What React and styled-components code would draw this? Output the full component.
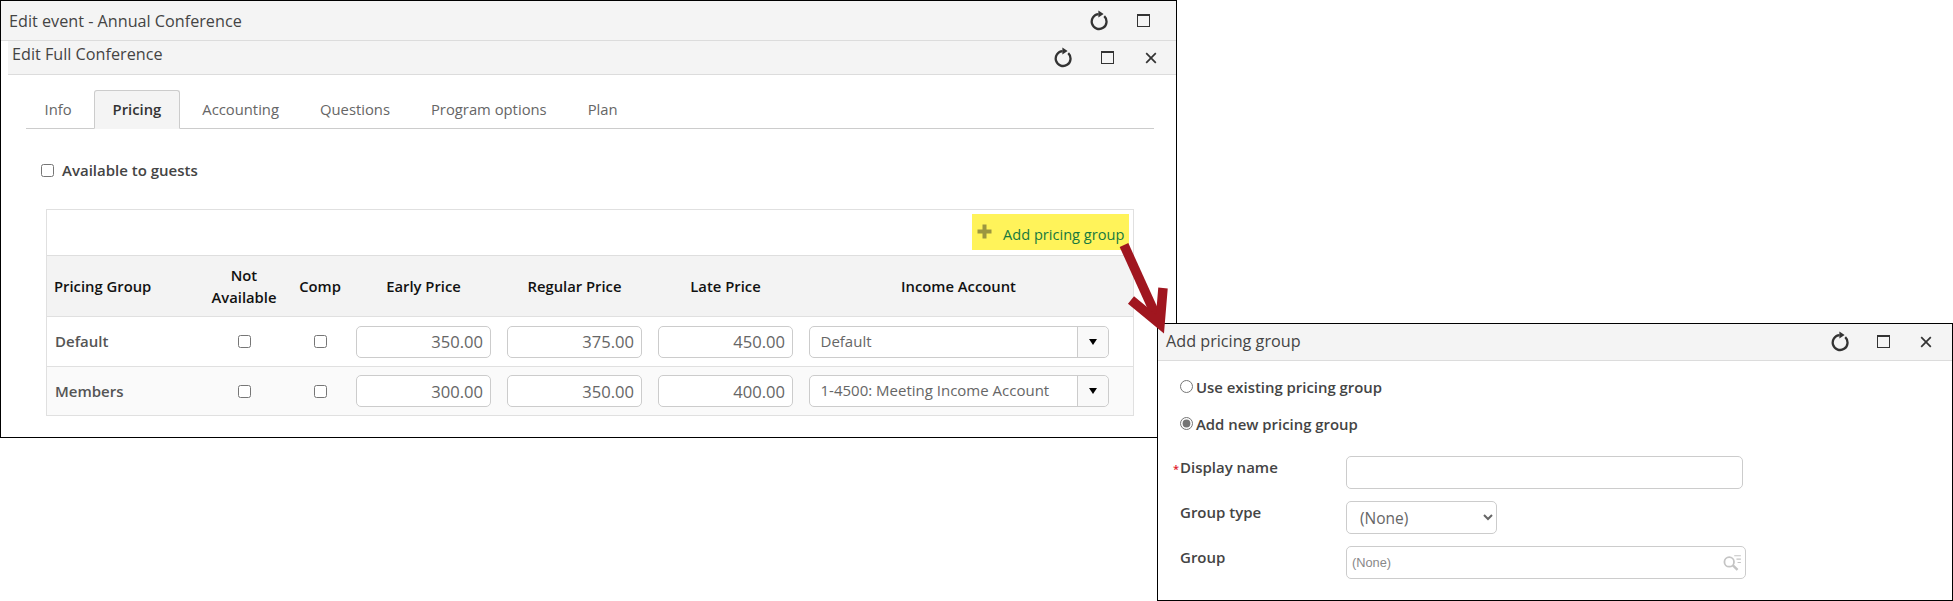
import styled, { createGlobalStyle } from "styled-components";

const GlobalStyle = createGlobalStyle`
    html, body {
        margin: 0;
        padding: 0;
        background: #fff;
    }
    body {
        font-family: "Open Sans", "Liberation Sans", sans-serif;
        color: #444;
    }
`;

const Desktop = styled.div`
    position: relative;
    width: 1953px;
    height: 601px;
    overflow: hidden;
`;

const Window = styled.div`
    position: absolute;
    box-sizing: border-box;
    left: ${(p) => p.$left}px;
    top: ${(p) => p.$top}px;
    width: ${(p) => p.$width}px;
    height: ${(p) => p.$height}px;
    background: #fff;
    border: 1.4px solid #000;
    display: flex;
    flex-direction: column;
`;

const TitleBar = styled.div`
    box-sizing: border-box;
    flex: none;
    display: flex;
    align-items: center;
    justify-content: space-between;
    height: ${(p) => p.$height}px;
    padding: ${(p) => p.$padding};
    background: #f4f4f4;
    border-bottom: 1px solid #dcdcdc;
`;

const Title = styled.span`
    font-size: 16.2px;
    color: #444;
    transform: translateY(${(p) => p.$shift || 0}px);
`;

const IconRow = styled.div`
    display: flex;
    align-items: center;
`;

const IconSlot = styled.span`
    width: ${(p) => p.$width || 44}px;
    display: flex;
    justify-content: center;
    align-items: center;
    color: #333;
`;

const MaxBox = styled.span`
    box-sizing: border-box;
    display: block;
    width: 13px;
    height: 13px;
    border: 1.3px solid #333;
    border-top-width: 2.4px;
`;

const Panel = styled.div`
    flex: 1;
    margin-left: 7px;
    display: flex;
    flex-direction: column;
`;

const Tabs = styled.div`
    display: flex;
    gap: 3px;
    height: 38px;
    margin: 15px 22px 0 17.5px;
    border-bottom: 1px solid #ccc;
`;

const Tab = styled.div`
    box-sizing: border-box;
    height: 39px;
    padding: 0 18px 2px;
    display: flex;
    align-items: center;
    font-size: 14.8px;
    font-weight: ${(p) => (p.$active ? 600 : 400)};
    color: ${(p) => (p.$active ? "#333" : "#666")};
    background: ${(p) => (p.$active ? "#f4f4f4" : "transparent")};
    border: 1px solid ${(p) => (p.$active ? "#ccc" : "transparent")};
    border-bottom: 1px solid ${(p) => (p.$active ? "#f4f4f4" : "transparent")};
    border-radius: 3px 3px 0 0;
`;

const Guests = styled.label`
    display: flex;
    align-items: center;
    gap: 8px;
    margin: 31px 0 0 33px;
    height: 20px;
    font-size: 15px;
    font-weight: 600;
    color: #444;
`;

const Check = styled.input.attrs({ type: "checkbox" })`
    margin: 0;
    width: 13px;
    height: 13px;
`;

const PriceTable = styled.div`
    box-sizing: border-box;
    width: 1088px;
    margin: 29px 0 0 38px;
    border: 1px solid #e0e0e0;
    border-bottom: 0;
`;

const Toolbar = styled.div`
    box-sizing: border-box;
    height: 46px;
    padding: 4px 4px 0 0;
    display: flex;
    justify-content: flex-end;
    align-items: flex-start;
    border-bottom: 1px solid #dedede;
`;

const AddLink = styled.div`
    box-sizing: border-box;
    width: 157px;
    height: 36px;
    padding: 4px 4px 0 5px;
    display: flex;
    align-items: center;
    background: #fff35a;
    color: #17793f;
    font-size: 14.6px;
    white-space: nowrap;

    svg {
        flex: none;
        margin: -5px 11px 0 0;
    }
`;

const Row = styled.div`
    box-sizing: border-box;
    display: grid;
    grid-template-columns: 149px 96px 56px 151px 151px 151px 315px 1fr;
    align-items: center;
    height: ${(p) => p.$height}px;
    background: ${(p) => p.$bg};
    border-bottom: 1px solid #e0e0e0;
`;

const HeadCell = styled.div`
    font-size: 14.8px;
    line-height: 22px;
    font-weight: 600;
    color: #111;
    text-align: ${(p) => (p.$left ? "left" : "center")};
    padding-left: ${(p) => (p.$left ? 7 : 0)}px;
`;

const NameCell = styled.div`
    font-size: 15px;
    font-weight: 600;
    color: #555;
    padding-left: 8px;
    transform: translateY(${(p) => p.$shift || 0}px);
`;

const Cell = styled.div`
    display: flex;
    justify-content: center;
    align-items: center;
`;

const PriceInput = styled.input`
    box-sizing: border-box;
    width: 135px;
    height: 32px;
    padding: 0 7px;
    text-align: right;
    font: 16.6px "Open Sans", sans-serif;
    color: #666;
    background: #fff;
    border: 1px solid #ccc;
    border-radius: 5px;
`;

const Combo = styled.div`
    box-sizing: border-box;
    width: 300px;
    height: 32px;
    display: flex;
    align-items: stretch;
    background: #fff;
    border: 1px solid #ccc;
    border-radius: 5px;
    font-size: 15px;
    color: #666;
`;

const ComboText = styled.span`
    flex: 1;
    padding-left: 11px;
    line-height: 29px;
    white-space: nowrap;
`;

const ComboButton = styled.span`
    flex: none;
    width: 30px;
    display: flex;
    align-items: center;
    justify-content: center;
    background: #f9f9f9;
    border-left: 1px solid #ccc;
    border-radius: 0 5px 5px 0;
`;

const Caret = styled.span`
    width: 0;
    height: 0;
    border-left: 4.5px solid transparent;
    border-right: 4.5px solid transparent;
    border-top: 6px solid #000;
`;

const DialogBody = styled.div`
    padding: 16px 0 0 22px;
    display: flex;
    flex-direction: column;
`;

const RadioLine = styled.label`
    display: flex;
    align-items: center;
    gap: 3px;
    height: 20px;
    margin-bottom: 17px;
    font-size: 14.9px;
    font-weight: 600;
    color: #444;
`;

const Radio = styled.input.attrs({ type: "radio" })`
    margin: 0;
    width: 13px;
    height: 13px;
    accent-color: #757575;
`;

const FormRow = styled.div`
    display: grid;
    grid-template-columns: 166px auto;
    justify-content: start;
    align-items: start;
    margin-top: ${(p) => p.$gap}px;
`;

const FieldLabel = styled.div`
    position: relative;
    font-size: 15px;
    font-weight: 600;
    line-height: 22px;
    color: #444;
`;

const Required = styled.span`
    position: absolute;
    left: -7px;
    top: 2px;
    font-size: 11px;
    color: #e0202a;
`;

const TextBox = styled.input`
    box-sizing: border-box;
    width: 397px;
    height: 33px;
    background: #fff;
    border: 1px solid #ccc;
    border-radius: 5px;
`;

const TypeSelect = styled.select`
    box-sizing: border-box;
    width: 151px;
    height: 33px;
    padding-left: 9px;
    font: 15.5px "Open Sans", sans-serif;
    color: #666;
    background: #fff;
    border: 1px solid #ccc;
    border-radius: 5px;
`;

const LookupBox = styled.div`
    box-sizing: border-box;
    width: 400px;
    height: 33px;
    padding: 0 3px 0 5px;
    display: flex;
    align-items: center;
    justify-content: space-between;
    border: 1px solid #ccc;
    border-radius: 5px;
    font: 12.8px "Liberation Sans", sans-serif;
    color: #888;
`;

const ArrowLayer = styled.svg`
    position: absolute;
    left: 0;
    top: 0;
    pointer-events: none;
`;

function RefreshIcon() {
    return (
        <svg width="20" height="21" viewBox="0 0 20 21" fill="none">
            <path d="M15.2 6.2A7.4 7.4 0 1 1 9.6 4.2" stroke="#333" strokeWidth="2.3" />
            <path d="M9.4 .6 14.6 4 9.4 7.4z" fill="#333" />
        </svg>
    );
}

function CloseIcon() {
    return (
        <svg width="12" height="12" viewBox="0 0 12 12" fill="none">
            <path d="M1.2 1.2 10.8 10.8M10.8 1.2 1.2 10.8" stroke="#333" strokeWidth="1.7" />
        </svg>
    );
}

function WindowIcons({ close, refreshWidth, maxWidth, closeWidth }) {
    return (
        <IconRow>
            <IconSlot $width={refreshWidth}>
                <RefreshIcon />
            </IconSlot>
            <IconSlot $width={maxWidth}>
                <MaxBox />
            </IconSlot>
            {close && (
                <IconSlot $width={closeWidth}>
                    <CloseIcon />
                </IconSlot>
            )}
        </IconRow>
    );
}

function PlusIcon() {
    return (
        <svg width="15" height="15" viewBox="0 0 15 15">
            <path d="M5.5 .5h4v5h5v4h-5v5h-4v-5h-5v-4h5z" fill="#9c9640" />
        </svg>
    );
}

function LookupIcon() {
    return (
        <svg width="20" height="18" viewBox="0 0 18 16" fill="none" stroke="#c4c4c4">
            <circle cx="6.5" cy="7" r="4.3" strokeWidth="1.6" />
            <path d="M9.8 10.2 14 14.2" strokeWidth="2.2" />
            <path d="M11 1.5h6M13 4.5h4M14 7.5h3" strokeWidth="1" />
        </svg>
    );
}

const rows = [
    { name: "Default", prices: ["350.00", "375.00", "450.00"], account: "Default", bg: "#fff", height: 50, shift: -1 },
    { name: "Members", prices: ["300.00", "350.00", "400.00"], account: "1-4500: Meeting Income Account", bg: "#fafafa", height: 49, shift: 0 },
];

function PriceRow({ row }) {
    return (
        <Row $height={row.height} $bg={row.bg}>
            <NameCell $shift={row.shift}>{row.name}</NameCell>
            <Cell>
                <Check />
            </Cell>
            <Cell>
                <Check />
            </Cell>
            {row.prices.map((price, i) => (
                <Cell key={i}>
                    <PriceInput defaultValue={price} />
                </Cell>
            ))}
            <Cell>
                <Combo>
                    <ComboText>{row.account}</ComboText>
                    <ComboButton>
                        <Caret />
                    </ComboButton>
                </Combo>
            </Cell>
        </Row>
    );
}

export default function App() {
    return (
        <Desktop>
            <GlobalStyle />
            <Window $left={0} $top={0} $width={1177} $height={438}>
                <TitleBar $height={40} $padding="0 11px 0 8px">
                    <Title>Edit event - Annual Conference</Title>
                    <WindowIcons refreshWidth={44} maxWidth={44} />
                </TitleBar>
                <Panel>
                    <TitleBar $height={34} $padding="0 4px 0 4px">
                        <Title $shift={-4}>Edit Full Conference</Title>
                        <WindowIcons close refreshWidth={44} maxWidth={44} closeWidth={43} />
                    </TitleBar>
                    <Tabs>
                        <Tab>Info</Tab>
                        <Tab $active>Pricing</Tab>
                        <Tab>Accounting</Tab>
                        <Tab>Questions</Tab>
                        <Tab>Program options</Tab>
                        <Tab>Plan</Tab>
                    </Tabs>
                    <Guests>
                        <Check />
                        Available to guests
                    </Guests>
                    <PriceTable>
                        <Toolbar>
                            <AddLink>
                                <PlusIcon />
                                Add pricing group
                            </AddLink>
                        </Toolbar>
                        <Row $height={61} $bg="#f3f3f3">
                            <HeadCell $left>Pricing Group</HeadCell>
                            <HeadCell>
                                Not
                                <br />
                                Available
                            </HeadCell>
                            <HeadCell>Comp</HeadCell>
                            <HeadCell>Early Price</HeadCell>
                            <HeadCell>Regular Price</HeadCell>
                            <HeadCell>Late Price</HeadCell>
                            <HeadCell>Income Account</HeadCell>
                        </Row>
                        {rows.map((row) => (
                            <PriceRow key={row.name} row={row} />
                        ))}
                    </PriceTable>
                </Panel>
            </Window>
            <Window $left={1157} $top={322.5} $width={796} $height={278.5}>
                <TitleBar $height={37} $padding="0 5px 0 8px">
                    <Title $shift={-1}>Add pricing group</Title>
                    <WindowIcons close refreshWidth={44} maxWidth={43} closeWidth={42} />
                </TitleBar>
                <DialogBody>
                    <RadioLine>
                        <Radio name="mode" />
                        Use existing pricing group
                    </RadioLine>
                    <RadioLine>
                        <Radio name="mode" defaultChecked />
                        Add new pricing group
                    </RadioLine>
                    <FormRow $gap={5.5}>
                        <FieldLabel>
                            <Required>*</Required>
                            Display name
                        </FieldLabel>
                        <TextBox />
                    </FormRow>
                    <FormRow $gap={12}>
                        <FieldLabel>Group type</FieldLabel>
                        <TypeSelect>
                            <option>(None)</option>
                        </TypeSelect>
                    </FormRow>
                    <FormRow $gap={12}>
                        <FieldLabel>Group</FieldLabel>
                        <LookupBox>
                            (None)
                            <LookupIcon />
                        </LookupBox>
                    </FormRow>
                </DialogBody>
            </Window>
            <ArrowLayer width="1953" height="601" fill="none" stroke="#a0161f">
                <path d="M1124 245 1157 318" strokeWidth="9.5" />
                <path d="M1131 300 1160 324 1163 288" strokeWidth="9.5" />
            </ArrowLayer>
        </Desktop>
    );
}
